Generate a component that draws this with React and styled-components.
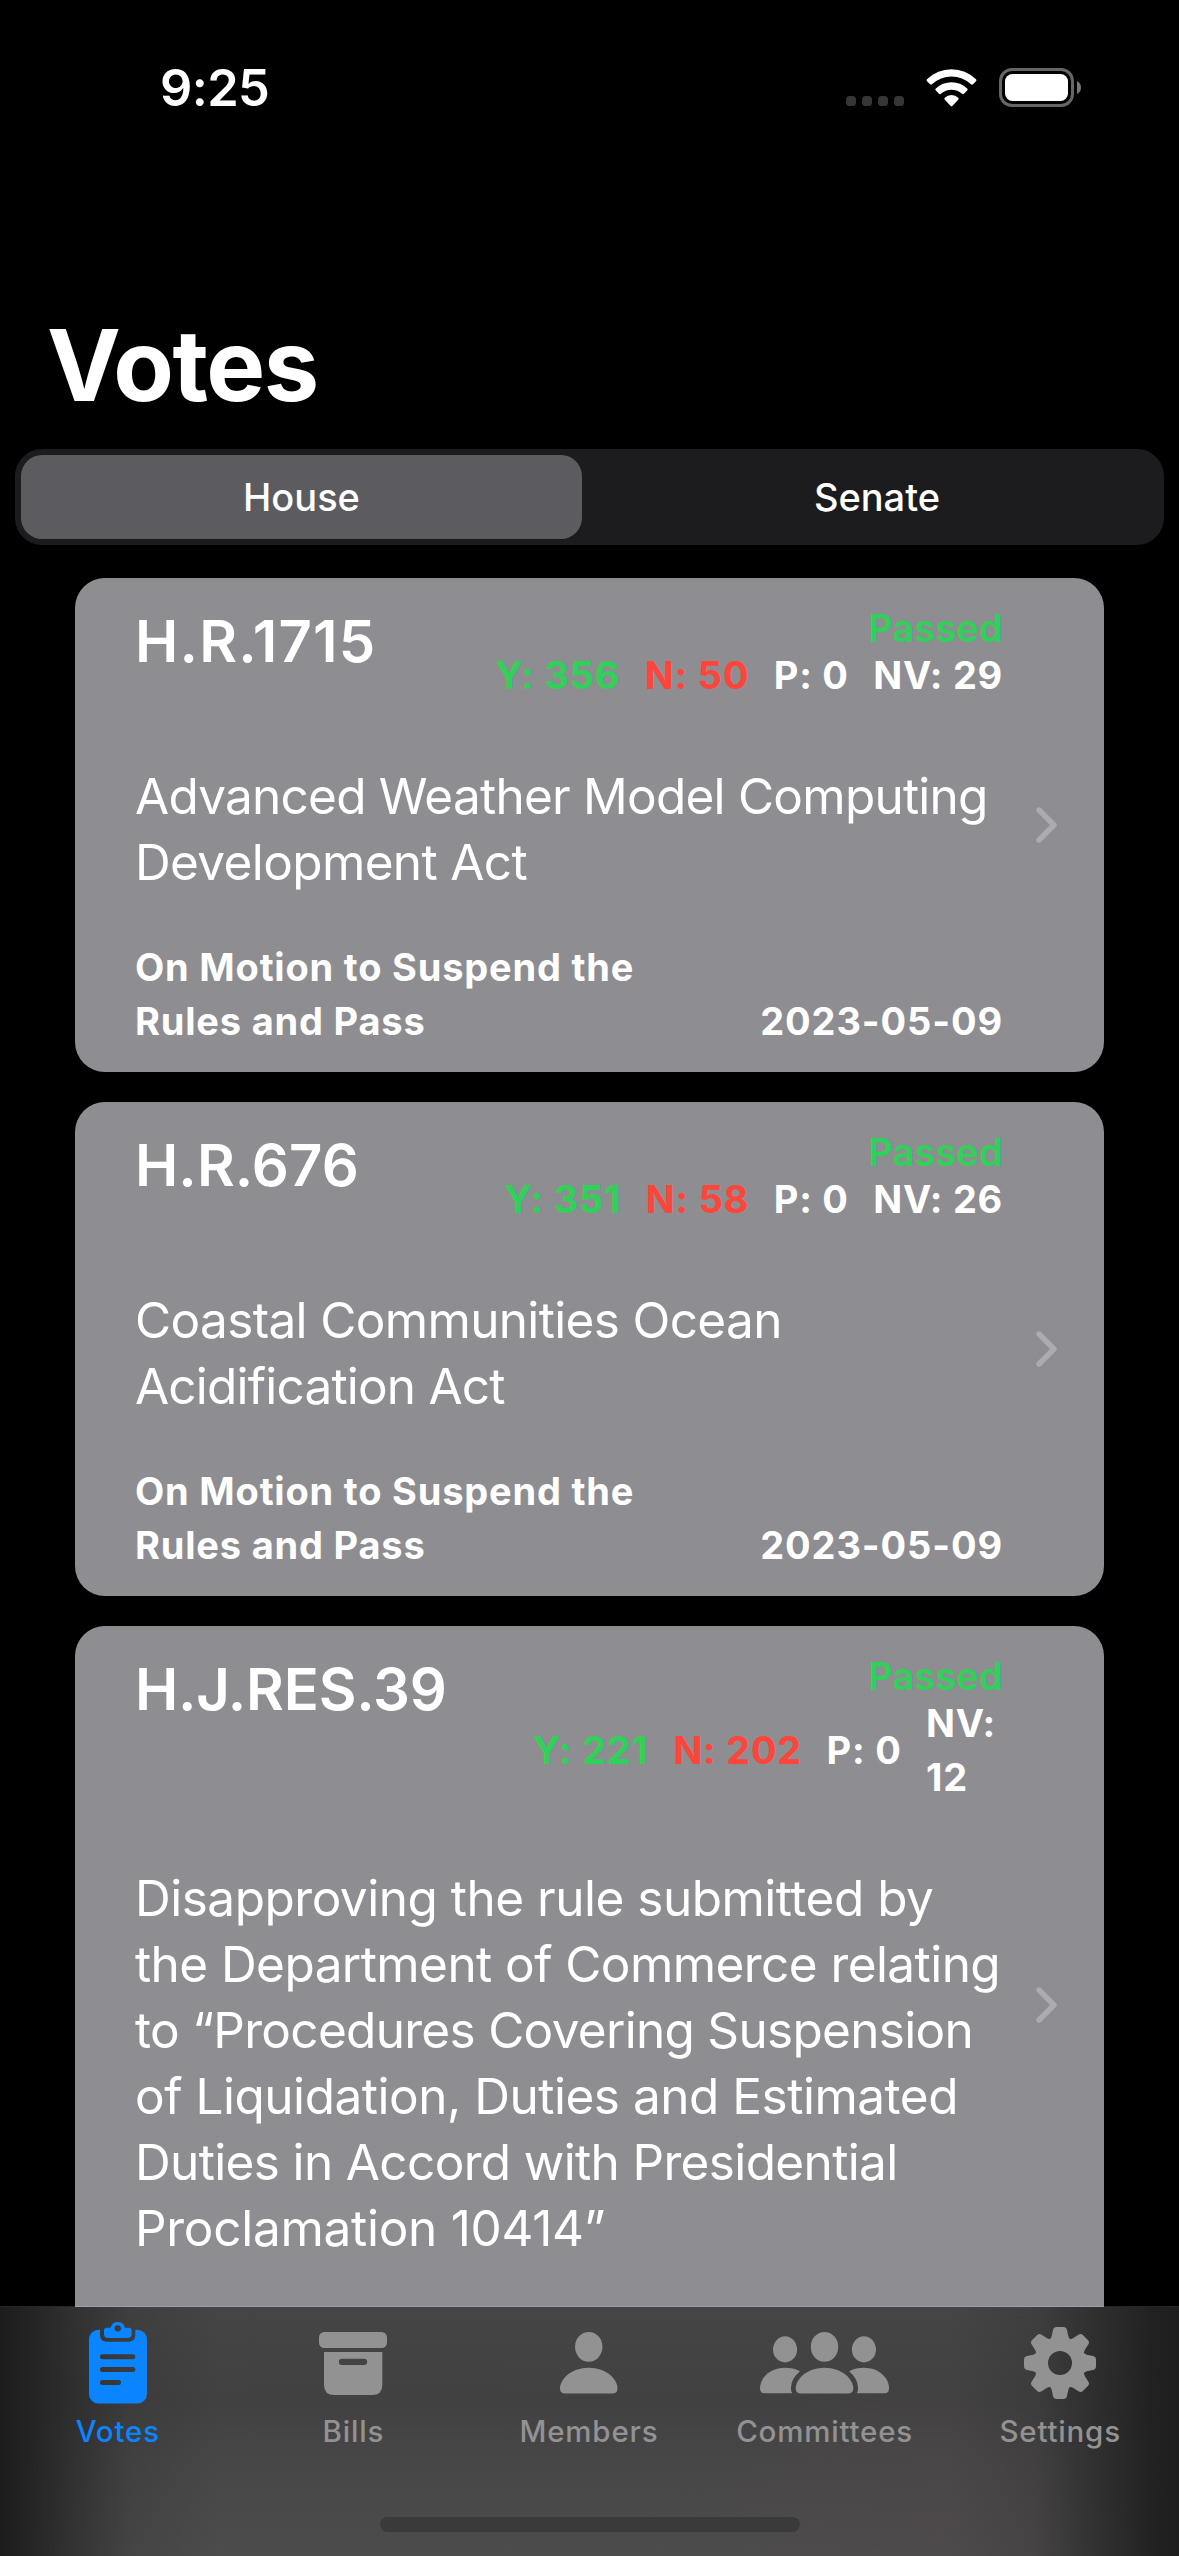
import React from "react";
import styled, { createGlobalStyle } from "styled-components";

const GlobalStyle = createGlobalStyle`
  * { box-sizing: border-box; }
  html, body { margin: 0; padding: 0; background: #000; }
  body { font-family: Inter, "Liberation Sans", sans-serif; color: #fff; overflow: hidden; }
  svg { display: block; }
`;

const Screen = styled.div`
  display: flex;
  flex-direction: column;
  width: 1179px;
  height: 2556px;
  background: #000;
  overflow: hidden;
`;

const StatusBar = styled.header`
  display: flex;
  align-items: center;
  justify-content: space-between;
  height: 175px;
  padding: 0 98px 0 160px;
  flex: none;
`;

const Clock = styled.time`
  font-size: 50.5px;
  font-weight: 600;
  line-height: 60px;
  letter-spacing: -0.6px;
`;

const StatusIcons = styled.div`
  display: flex;
  align-items: center;
`;

const SignalDots = styled.div`
  display: flex;
  gap: 6px;
  padding-top: 27px;
  margin-right: 22px;
`;

const Dot = styled.span`
  width: 10px;
  height: 10px;
  border-radius: 3.5px;
  background: #353535;
`;

const WifiSvg = styled.svg`
  margin-right: 22px;
`;

const PageTitle = styled.h1`
  margin: 125px 0 0 47px;
  height: 149px;
  font-size: 99px;
  font-weight: 700;
  line-height: 130px;
  letter-spacing: -1.5px;
  flex: none;
`;

const Segmented = styled.div`
  display: flex;
  flex: none;
  height: 96px;
  margin: 0 15px;
  padding: 6px;
  border-radius: 27px;
  background: #1c1c1e;
`;

const Segment = styled.button`
  flex: ${(p) => (p.$active ? "0 0 561px" : "1")};
  border: 0;
  border-radius: 21px;
  background: ${(p) => (p.$active ? "#5b5b60" : "transparent")};
  color: #fff;
  font-family: inherit;
  font-size: 38px;
  font-weight: 500;
  letter-spacing: 0;
  padding: 0 0 0 ${(p) => (p.$active ? "0" : "14px")};
`;

const List = styled.main`
  display: flex;
  flex-direction: column;
  gap: 30px;
  flex: 1;
  min-height: 0;
  padding: 33px 75px 0;
  overflow: hidden;
`;

const Card = styled.article`
  display: flex;
  align-items: center;
  flex: none;
  padding: 27px 44px 24px 60px;
  border-radius: 30px;
  background: #8e8d92;
`;

const CardBody = styled.div`
  width: 868px;
`;

const CardHeader = styled.div`
  display: flex;
  justify-content: space-between;
`;

const BillNumber = styled.h2`
  margin: 0;
  font-size: 58px;
  font-weight: 600;
  line-height: 72px;
  letter-spacing: ${(p) => p.$tracking}px;
`;

const Tally = styled.div`
  display: flex;
  flex-direction: column;
  align-items: flex-end;
  padding-top: 3px;
`;

const Result = styled.span`
  font-size: 38px;
  font-weight: 600;
  line-height: 40px;
  letter-spacing: 0.1px;
  color: #30d158;
`;

const Counts = styled.div`
  display: flex;
  align-items: center;
  gap: 24.5px;
`;

const tones = { yes: "#30d158", no: "#ff453a", plain: "#fff" };

const Count = styled.span`
  color: ${(p) => tones[p.$tone]};
  font-size: 38px;
  font-weight: 670;
  line-height: 54px;
  letter-spacing: 0.75px;
  white-space: pre;
  ${(p) => p.$wrapped && "width: 77px;"}
`;

const Summary = styled.p`
  margin: 61px 0 45px;
  font-size: 49.5px;
  line-height: 66px;
`;

const SummaryLine = styled.span`
  display: block;
  letter-spacing: ${(p) => p.$tracking}px;
  white-space: nowrap;
`;

const CardFooter = styled.div`
  display: flex;
  align-items: flex-end;
  justify-content: space-between;
  min-height: 54px;
  font-size: 38px;
  font-weight: 670;
  line-height: 54px;
  white-space: pre;
`;

const Motion = styled.span`
  letter-spacing: 0.8px;
`;

const VoteDate = styled.time`
  letter-spacing: 0.9px;
`;

const Chevron = styled.svg`
  margin: 0 0 4px 32px;
  flex: none;
`;

const TabBar = styled.nav`
  display: flex;
  flex-direction: column;
  align-items: center;
  flex: none;
  height: 250px;
  margin-top: -1px;
  position: relative;
  border-top: 1px solid rgba(255, 255, 255, 0.15);
  background:
    linear-gradient(90deg, rgba(28, 28, 29, 1) 0, rgba(30, 30, 30, 0.92) 20px, rgba(34, 34, 34, 0.62) 70px, rgba(44, 44, 44, 0.25) 130px, rgba(60, 60, 60, 0) 220px, rgba(60, 60, 60, 0) 950px, rgba(44, 44, 44, 0.25) 1035px, rgba(34, 34, 34, 0.62) 1095px, rgba(30, 30, 30, 0.92) 1155px, rgba(30, 30, 30, 1) 1179px),
    radial-gradient(ellipse 300px 190px at 940px 210px, rgba(88, 68, 68, 0.2), rgba(88, 68, 68, 0)),
    linear-gradient(180deg, #454545 0, #414142 38%, #474748 62%, #4c4c4d 100%);
  background-clip: padding-box;
`;

const Tabs = styled.div`
  display: flex;
  width: 1178px;
  align-self: flex-start;
  height: 210px;
`;

const Tab = styled.a`
  flex: 1 1 0;
  min-width: 0;
  display: flex;
  flex-direction: column;
  align-items: center;
  color: ${(p) => (p.$active ? "#0a84ff" : "#929292")};
`;

const TabIcon = styled.span`
  display: flex;
  align-items: center;
  height: 112px;
  padding-bottom: ${(p) => (p.$active ? "3px" : "0")};
`;

const TabLabel = styled.span`
  margin-top: -3px;
  font-size: 29.5px;
  font-weight: 480;
  line-height: 30px;
  letter-spacing: 0.8px;
`;

const HomeIndicator = styled.div`
  width: 420px;
  height: 15px;
  border-radius: 8px;
  background: #3a3a3a;
`;

const ClipboardIcon = () => (
  <svg width="58" height="84" viewBox="0 0 174 250" fill="currentColor">
    <mask id="clip-cut">
      <rect width="174" height="250" fill="#fff" />
      <path d="M33 20V43Q33 64 54 64H118Q139 64 139 43V20Z" fill="#000" />
      <rect x="33" y="102" width="106" height="15" rx="7.5" fill="#000" />
      <rect x="33" y="140" width="106" height="15" rx="7.5" fill="#000" />
      <rect x="33" y="179" width="63" height="15" rx="7.5" fill="#000" />
    </mask>
    <rect y="28" width="174" height="222" rx="29" mask="url(#clip-cut)" />
    <path
      fillRule="evenodd"
      d="M45 30Q45 22 53 22H65A22 22 0 0 1 108 22H120Q128 22 128 30V41Q128 53 116 53H57Q45 53 45 41ZM96 24A9.500 9.500 0 1 0 77 24A9.500 9.500 0 1 0 96 24Z"
    />
  </svg>
);

const ArchiveIcon = () => (
  <svg width="68" height="63" viewBox="0 0 204 189" fill="currentColor">
    <rect width="204" height="48" rx="16" />
    <path
      fillRule="evenodd"
      d="M15 60H190V158Q190 189 159 189H46Q15 189 15 158ZM69 80A9.500 9.500 0 0 0 69 99H135A9.500 9.500 0 0 0 135 80Z"
    />
  </svg>
);

const torso = "M0 168C0 143 32 107 86 107S172 143 172 168Q172 184 156 184H16Q0 184 0 168Z";
const sideTorso = "M0 168C0 140 27 107 76 107S150 140 150 168V184H16Q0 184 0 168Z";

const PersonIcon = () => (
  <svg width="57.500" height="61.500" viewBox="0 0 172 184" fill="currentColor">
    <ellipse cx="86" cy="44.500" rx="41" ry="44.500" />
    <path d={torso} />
  </svg>
);

const PeopleIcon = () => (
  <svg width="129" height="61.500" viewBox="0 0 386 184" fill="currentColor">
    <mask id="people-cut">
      <rect width="386" height="184" fill="#fff" />
      <path d={torso} transform="translate(107 0)" fill="#000" stroke="#000" strokeWidth="29" />
    </mask>
    <g mask="url(#people-cut)">
      <path d={sideTorso} />
      <path d={sideTorso} transform="matrix(-1 0 0 1 386 0)" />
    </g>
    <ellipse cx="75" cy="52" rx="36" ry="39" />
    <ellipse cx="311" cy="52" rx="36" ry="39" />
    <ellipse cx="193" cy="44.500" rx="41" ry="44.500" />
    <path d={torso} transform="translate(107 0)" />
  </svg>
);

const GearIcon = () => (
  <svg width="72" height="72" viewBox="-108 -108 216 216" fill="currentColor">
    <mask id="gear-hole">
      <rect x="-108" y="-108" width="216" height="216" fill="#fff" />
      <circle r="36" fill="#000" />
    </mask>
    <g mask="url(#gear-hole)">
      <circle r="78" />
      {[0, 45, 90, 135, 180, 225, 270, 315].map((a) => (
        <path
          key={a}
          transform={`rotate(${a})`}
          d="M-36 -64Q-27 -73 -25 -80L-21 -99Q-19 -108 -10 -108H10Q19 -108 21 -99L25 -80Q27 -73 36 -64Z"
        />
      ))}
    </g>
  </svg>
);

const votes = [
  {
    number: "H.R.1715",
    tracking: 1.2,
    counts: [["yes", "Y: 356"], ["no", "N: 50"], ["plain", "P: 0"], ["plain", "NV: 29"]],
    summary: [
      ["Advanced Weather Model Computing", -0.76],
      ["Development Act", -0.63],
    ],
    motion: "On Motion to Suspend the\nRules and Pass",
    date: "2023-05-09",
  },
  {
    number: "H.R.676",
    tracking: 0.1,
    counts: [["yes", "Y: 351"], ["no", "N: 58"], ["plain", "P: 0"], ["plain", "NV: 26"]],
    summary: [
      ["Coastal Communities Ocean", -0.65],
      ["Acidification Act", -0.8],
    ],
    motion: "On Motion to Suspend the\nRules and Pass",
    date: "2023-05-09",
  },
  {
    number: "H.J.RES.39",
    tracking: -0.2,
    counts: [["yes", "Y: 221"], ["no", "N: 202"], ["plain", "P: 0"], ["plain", "NV:\n12"]],
    summary: [
      ["Disapproving the rule submitted by", -0.49],
      ["the Department of Commerce relating", -0.57],
      ["to “Procedures Covering Suspension", -0.7],
      ["of Liquidation, Duties and Estimated", -0.48],
      ["Duties in Accord with Presidential", -0.64],
      ["Proclamation 10414”", -0.28],
    ],
  },
];

const tabs = [
  { label: "Votes", Icon: ClipboardIcon, active: true },
  { label: "Bills", Icon: ArchiveIcon },
  { label: "Members", Icon: PersonIcon },
  { label: "Committees", Icon: PeopleIcon },
  { label: "Settings", Icon: GearIcon },
];

function VoteCard({ vote }) {
  return (
    <Card>
      <CardBody>
        <CardHeader>
          <BillNumber $tracking={vote.tracking}>{vote.number}</BillNumber>
          <Tally>
            <Result>Passed</Result>
            <Counts>
              {vote.counts.map(([tone, text]) => (
                <Count key={text} $tone={tone} $wrapped={text.includes("\n")}>
                  {text}
                </Count>
              ))}
            </Counts>
          </Tally>
        </CardHeader>
        <Summary>
          {vote.summary.map(([line, tracking]) => (
            <SummaryLine key={line} $tracking={tracking}>
              {line}
            </SummaryLine>
          ))}
        </Summary>
        <CardFooter>
          {vote.motion && <Motion>{vote.motion}</Motion>}
          {vote.date && <VoteDate>{vote.date}</VoteDate>}
        </CardFooter>
      </CardBody>
      <Chevron width="24" height="38" viewBox="0 0 24 38" fill="none">
        <path d="M4 4L19 19L4 34" stroke="#acabb0" strokeWidth="5.400" strokeLinecap="round" strokeLinejoin="round" />
      </Chevron>
    </Card>
  );
}

export default function App() {
  return (
    <Screen>
      <GlobalStyle />
      <StatusBar>
        <Clock>9:25</Clock>
        <StatusIcons>
          <SignalDots>
            <Dot />
            <Dot />
            <Dot />
            <Dot />
          </SignalDots>
          <WifiSvg width="51" height="38" viewBox="0 0 51 38" fill="#fff">
            <path d="M1 10.300Q11.500 0.300 25.500 0.300T50 10.300Q51 11.300 50 12.300L47 15.300Q46 16.200 45 15.300Q36.500 7.500 25.500 7.500T6 15.300Q5 16.200 4 15.300L1 12.300Q0 11.300 1 10.300Z" />
            <path d="M9.800 19.500Q16.500 13.200 25.500 13.200T41.200 19.500Q42.200 20.500 41.200 21.500L38 24.700Q37 25.600 36 24.700Q31.500 20.800 25.500 20.800T15 24.700Q14 25.600 13 24.700L9.800 21.500Q8.800 20.500 9.800 19.500Z" />
            <path d="M18.800 28.700Q21.500 25.900 25.500 25.900T32.200 28.700Q33.200 29.700 32.200 30.700L26.300 37Q25.500 37.800 24.700 37L18.800 30.700Q17.800 29.700 18.800 28.700Z" />
          </WifiSvg>
          <svg width="82" height="39" viewBox="0 0 82 39">
            <rect x="1.500" y="1.500" width="72" height="36" rx="11.500" fill="none" stroke="#666" strokeWidth="3" />
            <rect x="6" y="6" width="63" height="27" rx="7.500" fill="#fff" />
            <path d="M78 13Q82 15 82 19.500T78 26Z" fill="#777" />
          </svg>
        </StatusIcons>
      </StatusBar>
      <PageTitle>Votes</PageTitle>
      <Segmented>
        <Segment $active>House</Segment>
        <Segment>Senate</Segment>
      </Segmented>
      <List>
        {votes.map((vote) => (
          <VoteCard key={vote.number} vote={vote} />
        ))}
      </List>
      <TabBar>
        <Tabs>
          {tabs.map(({ label, Icon, active }) => (
            <Tab key={label} $active={active}>
              <TabIcon $active={active}>
                <Icon />
              </TabIcon>
              <TabLabel>{label}</TabLabel>
            </Tab>
          ))}
        </Tabs>
        <HomeIndicator />
      </TabBar>
    </Screen>
  );
}
